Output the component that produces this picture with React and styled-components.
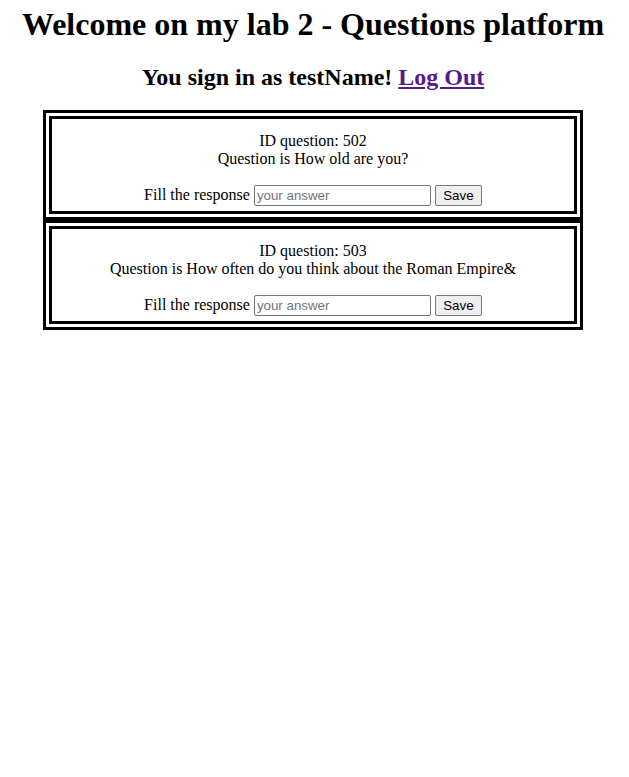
import React from 'react'
import styled, { createGlobalStyle } from 'styled-components'

const GlobalStyle = createGlobalStyle`
  body {
    margin: 0;
    background: #fff;
    font-family: 'Liberation Serif', 'Times New Roman', serif;
    color: #000;
  }
`

const questions = [
  { id: 502, text: 'How old are you?' },
  { id: 503, text: 'How often do you think about the Roman Empire&' },
]

const App = () => {
  return (
    <Page>
      <GlobalStyle />
      <Title>Welcome on my lab 2 - Questions platform</Title>
      <SubTitle>
        You sign in as testName! <a href='#logout'>Log Out</a>
      </SubTitle>
      <List>
        {questions.map(q => (
          <Card key={q.id}>
            <CardInner>
              <div>ID question: {q.id}</div>
              <div>Question is {q.text}</div>
              <AnswerForm onSubmit={e => e.preventDefault()}>
                Fill the response <AnswerInput type='text' placeholder='your answer' /> <SaveButton type='submit'>Save</SaveButton>
              </AnswerForm>
            </CardInner>
          </Card>
        ))}
      </List>
    </Page>
  )
}

const Page = styled.div`
  padding: 6px 11px 8px 8px;
  text-align: center;
`

const Title = styled.h1`
  margin: 0;
  font-size: 32px;
  font-weight: bold;
`

const SubTitle = styled.h2`
  margin: 21px 0 19px;
  font-size: 24px;
  font-weight: bold;

  a {
    color: #551a8b;
    text-decoration: underline;
  }
`

const List = styled.div`
  width: 540px;
  margin: 0 auto;
`

const Card = styled.div`
  border: 3px solid #000;
  padding: 3px;
`

const CardInner = styled.div`
  border: 3px solid #000;
  padding: 13px 10px 5px;
  font-size: 16px;
`

const AnswerForm = styled.form`
  margin: 17px 0 0;
`

const AnswerInput = styled.input`
  box-sizing: border-box;
  width: 177px;
  height: 21px;
  padding: 1px 2px;
  border: 1px solid #767676;
  border-radius: 2px;
  font-family: 'Liberation Sans', Arial, sans-serif;
  font-size: 13.333px;

  &::placeholder {
    color: #757575;
  }
`

const SaveButton = styled.button`
  box-sizing: border-box;
  width: 47px;
  height: 21px;
  padding: 1px 6px;
  background: #efefef;
  border: 1px solid #767676;
  border-radius: 2px;
  font-family: 'Liberation Sans', Arial, sans-serif;
  font-size: 13.333px;
  color: #000;
`

export default App
